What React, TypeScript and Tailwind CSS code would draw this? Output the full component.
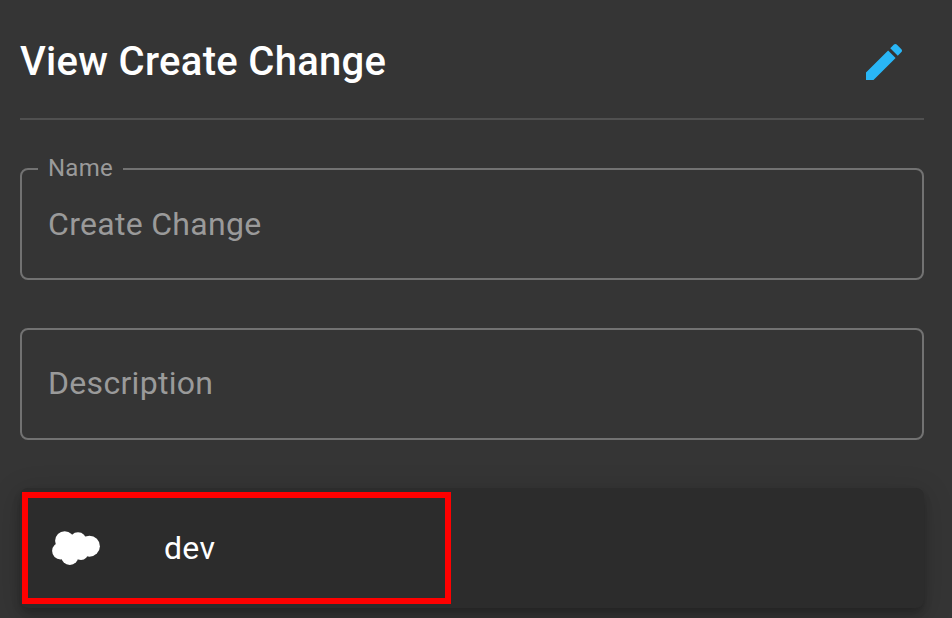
import type { ReactNode } from "react";

function EditIcon() {
  return (
    <svg viewBox="0 0 24 24" className="h-12 w-12 fill-[#29b6f6]">
      <path d="M3 17.25V21h3.75L17.81 9.94l-3.75-3.75L3 17.25zM20.71 7.04c.39-.39.39-1.02 0-1.41l-2.34-2.34c-.39-.39-1.02-.39-1.41 0l-1.83 1.83 3.75 3.75 1.83-1.83z" />
    </svg>
  );
}

function CloudIcon() {
  return (
    <svg viewBox="0 0 48 34" className="h-[34px] w-12 shrink-0 fill-white">
      <circle cx="12.7" cy="9.8" r="9.6" />
      <circle cx="8.6" cy="20" r="8.5" />
      <circle cx="26" cy="9.6" r="8.4" />
      <circle cx="37.4" cy="15.2" r="10.5" />
      <circle cx="17.8" cy="25.4" r="8.5" />
      <circle cx="29" cy="21.5" r="7.4" />
      <path d="M10 10h26v13H10z" />
    </svg>
  );
}

function Field({ label, children }: { label?: string; children: ReactNode }) {
  return (
    <fieldset
      className={`h-[112px] min-w-0 rounded-lg border-2 border-[#727272] pl-[26px] text-[32px] leading-[46px] tracking-[0.3px] text-[#9a9a9a] ${
        label ? "" : "pt-[30px]"
      }`}
    >
      {label && (
        <legend className="-ml-[10px] h-0 px-[10px] text-2xl leading-0 tracking-[0.225px]">
          <span className="relative -top-px">{label}</span>
        </legend>
      )}
      <div className={label ? "pt-[31px]" : ""}>{children}</div>
    </fieldset>
  );
}

export default function App() {
  return (
    <main className="h-[618px] w-[952px] overflow-hidden bg-[#353535] pl-5 pr-7 font-['Roboto',sans-serif]">
      <header className="flex h-[120px] items-center justify-between border-b-2 border-[#505050] pr-4 pt-[6px]">
        <h1 className="text-[40px] font-medium leading-[64px] tracking-[0.3px] text-white">
          View Create Change
        </h1>
        <EditIcon />
      </header>
      <div className="flex flex-col gap-12 pt-12">
        <Field label="Name">Create Change</Field>
        <Field>Description</Field>
        <div className="h-[120px] rounded-lg bg-[#2c2c2c] pl-[2px] pt-[4px] shadow-[0_4px_8px_-2px_rgba(0,0,0,0.2),0_8px_10px_0_rgba(0,0,0,0.1),0_6px_28px_4px_rgba(0,0,0,0.12)]">
          <div className="flex h-[112px] w-[429px] items-center border-[6px] border-[#ff0000] pl-6">
            <CloudIcon />
            <span className="ml-16 text-[32px] leading-[48px] tracking-[0.3px] text-white">dev</span>
          </div>
        </div>
      </div>
    </main>
  );
}
